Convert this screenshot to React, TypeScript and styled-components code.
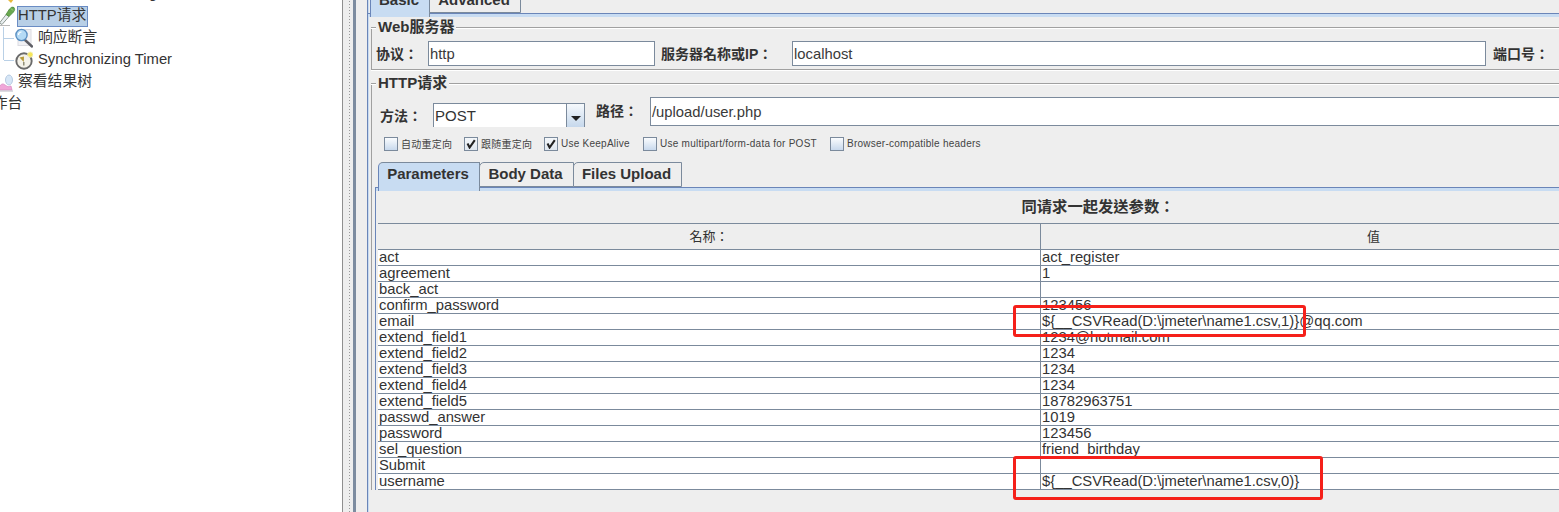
import React from "react";
import styled, { createGlobalStyle } from "styled-components";

const Global = createGlobalStyle`
  html, body { margin: 0; padding: 0; background: #eeeeee; overflow: hidden; }
  #root { width: 1559px; height: 512px; }
`;

const SANS = `"Liberation Sans", "Noto Sans CJK SC", sans-serif`;
const LABEL = `"Liberation Sans", "Noto Sans CJK TC", sans-serif`;
const BLUE = "#6a85b8";
const BAND = "#c8dcf2";
const EDGE = "#7b8a9c";
const RULE = "#a0a0a0";
const INK = "#333333";

const Page = styled.div`
  position: relative;
  display: flex;
  width: 1559px;
  height: 512px;
  overflow: hidden;
  background: #eeeeee;
  color: ${INK};
  font-family: ${SANS};
`;

/* ---------- tree ---------- */
const Tree = styled.div`
  flex: 0 0 342px;
  background: #ffffff;
  margin-top: -17px;
  height: 529px;
  overflow: hidden;
`;
const TreeRow = styled.div<{ $indent: number }>`
  position: relative;
  display: flex;
  align-items: center;
  gap: ${(p) => (p.$indent > 0 ? 5 : 2)}px;
  height: 22px;
  padding-left: ${(p) => p.$indent}px;
  font-size: 14.8px;
  white-space: nowrap;
`;
const Guide = styled.span<{ $long?: boolean }>`
  position: absolute;
  left: 3px;
  top: 0;
  width: 10px;
  height: ${(p) => (p.$long ? 22 : 11)}px;
  border-left: 1px solid #b9d0e6;
  &::after {
    content: "";
    position: absolute;
    left: 0;
    top: 11px;
    width: 10px;
    border-top: 1px solid #b9d0e6;
  }
`;
const TreeIcon = styled.svg<{ $shift?: number }>`
  flex: 0 0 18px;
  width: 18px;
  height: 20px;
  margin-left: ${(p) => p.$shift ?? 0}px;
`;
const TreeText = styled.span<{ $selected?: boolean; $shift?: number }>`
  display: inline-flex;
  align-items: center;
  height: 21px;
  padding: 0 2px 2px 1px;
  margin-left: ${(p) => p.$shift ?? -1}px;
  box-sizing: border-box;
  line-height: 16px;
  background: ${(p) => (p.$selected ? "#b8cfe6" : "transparent")};
  outline: ${(p) => (p.$selected ? "1px solid #6a8cc4" : "none")};
  outline-offset: -1px;
`;

/* ---------- splitter ---------- */
const Splitter = styled.div`
  flex: 0 0 25px;
  display: flex;
  border-left: 1px solid #8f8f8f;
  box-sizing: border-box;
`;
const Dots = styled.div`
  flex: 0 0 10px;
  background-image: radial-gradient(circle, #9a9a9a 0.7px, transparent 0.8px);
  background-size: 3px 3px;
  background-position: 5px 0;
  background-repeat: repeat-y;
`;
const SplitBar = styled.div`
  flex: 0 0 3px;
  background: #7d8ca0;
`;

/* ---------- main ---------- */
const Main = styled.div`
  flex: 1;
  min-width: 0;
  border-left: 1px solid ${BLUE};
  box-shadow: inset 1px 0 0 ${BAND};
  overflow: hidden;
`;
const TabStrip = styled.div<{ $left: number; $top?: number }>`
  display: flex;
  height: 25px;
  margin-top: ${(p) => p.$top ?? 0}px;
  margin-left: ${(p) => p.$left}px;
  position: relative;
  z-index: 1;
`;
const Tab = styled.div<{ $active?: boolean; $w: number }>`
  width: ${(p) => p.$w}px;
  box-sizing: border-box;
  display: flex;
  align-items: center;
  justify-content: center;
  padding: 0 2px ${(p) => (p.$active ? 7 : 3)}px 0;
  font-size: 15px;
  font-weight: 700;
  color: ${INK};
  background: ${(p) => (p.$active ? BAND : "#eeeeee")};
  border: 1px solid ${EDGE};
  border-left-color: ${(p) => (p.$active ? BLUE : EDGE)};
  border-bottom: ${(p) => (p.$active ? "none" : `1px solid ${EDGE}`)};
  border-top-left-radius: 5px;
  margin-right: -1px;
  margin-bottom: ${(p) => (p.$active ? -4 : 0)}px;
`;
const TabPane = styled.div`
  border-top: 1px solid ${BLUE};
`;
const Band = styled.div`
  height: 3px;
  background: ${BAND};
`;
const Content = styled.div`
  padding: 2px 0 0 3px;
  width: 1700px;
`;

/* ---------- titled borders ---------- */
const Section = styled.section<{ $gap?: number }>`
  margin-top: ${(p) => p.$gap ?? 0}px;
`;
const SectionHead = styled.div`
  display: flex;
  height: 16px;
  position: relative;
  z-index: 1;
`;
const HeadRule = styled.div<{ $w?: number }>`
  ${(p) => (p.$w ? `flex: 0 0 ${p.$w}px;` : "flex: 1;")}
  height: 0;
  margin-top: 8px;
  border-top: 1px solid ${RULE};
  border-bottom: 1px solid #ffffff;
`;
const SectionTitle = styled.div`
  padding: 0 2px;
  font-family: ${LABEL};
  font-size: 15px;
  font-weight: 700;
  line-height: 16px;
  white-space: nowrap;
`;
const SectionBody = styled.div<{ $closed?: boolean }>`
  margin-top: -8px;
  padding-top: 14px;
  border-left: 1px solid ${RULE};
  ${(p) => p.$closed && `border-bottom: 1px solid ${RULE}; box-shadow: 0 1px 0 #fff; padding-bottom: 3px;`}
`;

/* ---------- forms ---------- */
const ServerRow = styled.div`
  display: flex;
  align-items: center;
  height: 25px;
  padding-left: 4px;
`;
const PathRow = styled.div`
  display: flex;
  height: 30px;
  padding-left: 8px;
`;
const Label = styled.label<{ $w: number; $after: number; $self?: string; $pad?: number; $top?: number }>`
  flex: 0 0 ${(p) => p.$w}px;
  margin-right: ${(p) => p.$after}px;
  margin-top: ${(p) => p.$top ?? 0}px;
  align-self: ${(p) => p.$self ?? "center"};
  padding-bottom: ${(p) => p.$pad ?? 0}px;
  font-family: ${LABEL};
  font-size: 14px;
  font-weight: 700;
  line-height: 16px;
  white-space: nowrap;
`;
const Field = styled.div<{ $w: number; $h: number; $after?: number }>`
  flex: 0 0 ${(p) => p.$w}px;
  height: ${(p) => p.$h}px;
  margin-right: ${(p) => p.$after ?? 0}px;
  box-sizing: border-box;
  display: flex;
  align-items: center;
  padding-left: 1px;
  background: #ffffff;
  border: 1px solid ${EDGE};
  font-size: 14.8px;
  color: #3a3a3a;
`;
const Combo = styled.div`
  flex: 0 0 152px;
  height: 24px;
  margin: 6px 11px 0 0;
  box-sizing: border-box;
  display: flex;
  border: 1px solid ${EDGE};
  border-bottom: none;
  background: #ffffff;
`;
const ComboValue = styled.div`
  flex: 1;
  display: flex;
  align-items: center;
  padding-left: 1px;
  font-size: 15px;
`;
const ComboButton = styled.div`
  flex: 0 0 18px;
  display: flex;
  align-items: center;
  justify-content: center;
  padding-top: 5px;
  box-sizing: border-box;
  border-left: 1px solid ${EDGE};
  background: linear-gradient(#f6f9fc, #c6d8ec);
  &::after {
    content: "";
    border-left: 5px solid transparent;
    border-right: 5px solid transparent;
    border-top: 5px solid #222;
  }
`;
const OptionRow = styled.div`
  display: grid;
  grid-template-columns: 80px 80px 99px 187px auto;
  justify-content: start;
  align-items: center;
  height: 14px;
  margin-top: 9px;
  padding-left: 12px;
`;
const Option = styled.div`
  display: flex;
  align-items: center;
  gap: 3px;
  font-size: 10px;
  letter-spacing: 0.25px;
  color: #444444;
  white-space: nowrap;
`;
const Box = styled.span<{ $on?: boolean }>`
  flex: 0 0 14px;
  width: 14px;
  height: 14px;
  box-sizing: border-box;
  display: flex;
  align-items: center;
  justify-content: center;
  border: 1px solid ${EDGE};
  background: ${(p) => (p.$on ? "linear-gradient(#f4f7fa, #dfe7f0)" : "linear-gradient(#fafcfe, #c8d9ed)")};
`;

/* ---------- inner tabs + table ---------- */
const InnerTabs = styled.div`
  margin: 12px 0 0 3px;
`;
const InnerPane = styled.div`
  border-top: 1px solid ${BLUE};
  border-left: 1px solid ${BLUE};
`;
const TableTitle = styled.div`
  width: 1444px;
  height: 32px;
  line-height: 32px;
  text-align: center;
  font-family: ${LABEL};
  font-size: 15.3px;
  font-weight: 700;
`;
const Table = styled.div`
  margin-left: 2px;
  width: 1328px;
  border-top: 1px solid ${EDGE};
`;
const Row = styled.div<{ $head?: boolean }>`
  display: grid;
  grid-template-columns: 662px 666px;
  height: ${(p) => (p.$head ? 25 : 15)}px;
  border-bottom: 1px solid ${EDGE};
  background: ${(p) => (p.$head ? "#eeeeee" : "#ffffff")};
`;
const Cell = styled.div`
  padding-left: 1px;
  font-size: 14.8px;
  line-height: 15px;
  color: ${INK};
  white-space: nowrap;
  & + & {
    border-left: 1px solid ${EDGE};
  }
`;
const HeadCell = styled.div`
  display: flex;
  align-items: center;
  justify-content: center;
  padding-bottom: 2px;
  font-family: ${LABEL};
  font-size: 13px;
  & + & {
    border-left: 1px solid ${EDGE};
  }
`;
const Callout = styled.div<{ $x: number; $y: number; $w: number; $h: number }>`
  position: absolute;
  left: ${(p) => p.$x}px;
  top: ${(p) => p.$y}px;
  width: ${(p) => p.$w}px;
  height: ${(p) => p.$h}px;
  box-sizing: border-box;
  border: 3px solid #f5201a;
  border-radius: 3px;
  pointer-events: none;
`;

const rows: [string, string][] = [
  ["act", "act_register"],
  ["agreement", "1"],
  ["back_act", ""],
  ["confirm_password", "123456"],
  ["email", "${__CSVRead(D:\\jmeter\\name1.csv,1)}@qq.com"],
  ["extend_field1", "1234@hotmail.com"],
  ["extend_field2", "1234"],
  ["extend_field3", "1234"],
  ["extend_field4", "1234"],
  ["extend_field5", "18782963751"],
  ["passwd_answer", "1019"],
  ["password", "123456"],
  ["sel_question", "friend_birthday"],
  ["Submit", ""],
  ["username", "${__CSVRead(D:\\jmeter\\name1.csv,0)}"],
];

const options: [string, boolean][] = [
  ["自动重定向", false],
  ["跟随重定向", true],
  ["Use KeepAlive", true],
  ["Use multipart/form-data for POST", false],
  ["Browser-compatible headers", false],
];

const Dropper = () => (
  <TreeIcon $shift={-2} viewBox="0 0 18 20">
    <path d="M1.5 17 L8.5 8 L11 10.5 L4 18.5 Z" fill="#e8eef0" stroke="#8f9a94" strokeWidth="1" />
    <path d="M8 8.5 L11.5 3 Q14 0 16 1.5 Q17.5 3.5 15.5 6 L11 10.5 Z" fill="#6aa84f" stroke="#4a8a3a" strokeWidth="0.8" />
    <path d="M13 2.5 L15 4.5" stroke="#a7d690" strokeWidth="1" />
    <path d="M1 19.5 L12 19.5" stroke="#b8b8b8" strokeWidth="1" />
  </TreeIcon>
);
const Magnifier = () => (
  <TreeIcon viewBox="0 0 18 20">
    <rect x="3" y="1.5" width="13" height="16" fill="#f1f1f4" stroke="#dcdce2" />
    <path d="M10 12 L17 18.5" stroke="#5f5f66" strokeWidth="2.4" strokeLinecap="round" />
    <circle cx="6.5" cy="7" r="5.6" fill="#b4daf5" stroke="#5a8fc2" strokeWidth="1.4" />
    <path d="M3.5 7 A3 3 0 0 1 6.5 4" fill="none" stroke="#ffffff" strokeWidth="1.2" />
  </TreeIcon>
);
const Clock = () => (
  <TreeIcon viewBox="0 0 18 20">
    <circle cx="9" cy="11" r="7.7" fill="#f4f2ea" stroke="#6a6a6a" strokeWidth="1.9" />
    <path d="M8.8 12 L4.5 7.5 L9 6.5 Z" fill="#b69a3a" />
    <path d="M8.8 12 L8.8 15.5" stroke="#7e7e66" strokeWidth="1.3" />
    <circle cx="15.3" cy="4.6" r="2.7" fill="#f7e65a" stroke="#f4f1c4" strokeWidth="0.9" />
  </TreeIcon>
);
const ResultTree = () => (
  <TreeIcon $shift={-2} viewBox="0 0 18 20">
    <path d="M1 18 L1 15 Q4 10 7 13 Q10 16 13 14 L14 18 Z" fill="#f0a6d8" stroke="#d886c0" strokeWidth="0.7" />
    <ellipse cx="11" cy="8" rx="3.5" ry="5" fill="#d6e6f6" stroke="#a9c0da" strokeWidth="0.8" />
    <path d="M0 19 L15 19" stroke="#b9b9c4" strokeWidth="1" />
  </TreeIcon>
);
const TopIcon = () => (
  <TreeIcon $shift={-2} viewBox="0 0 18 20">
    <path d="M9 15 L13 19 L16 15 L12 12 Z" fill="#e7b93c" />
  </TreeIcon>
);
const Check = () => (
  <svg width="10" height="10" viewBox="0 0 10 10">
    <path d="M1.5 4.5 L3.6 8.5 L8.8 1.2" fill="none" stroke="#222" strokeWidth="2.1" />
  </svg>
);

export default function App() {
  return (
    <Page>
      <Global />
      <Tree>
        <TreeRow $indent={0}>
          <TopIcon />
          <TreeText>CSV Data Set Config</TreeText>
        </TreeRow>
        <TreeRow $indent={0}>
          <Dropper />
          <TreeText $selected>HTTP请求</TreeText>
        </TreeRow>
        <TreeRow $indent={15}>
          <Guide $long />
          <Magnifier />
          <TreeText>响应断言</TreeText>
        </TreeRow>
        <TreeRow $indent={15}>
          <Guide />
          <Clock />
          <TreeText>Synchronizing Timer</TreeText>
        </TreeRow>
        <TreeRow $indent={0}>
          <ResultTree />
          <TreeText>察看结果树</TreeText>
        </TreeRow>
        <TreeRow $indent={0}>
          <TreeText $shift={-23}>工作台</TreeText>
        </TreeRow>
      </Tree>

      <Splitter>
        <Dots />
        <SplitBar />
      </Splitter>

      <Main>
        <TabStrip $left={2} $top={-12}>
          <Tab $active $w={60}>Basic</Tab>
          <Tab $w={92}>Advanced</Tab>
        </TabStrip>
        <TabPane>
          <Band />
          <Content>
            <Section>
              <SectionHead>
                <HeadRule $w={5} />
                <SectionTitle>Web服务器</SectionTitle>
                <HeadRule />
              </SectionHead>
              <SectionBody $closed>
                <ServerRow>
                  <Label $w={42} $after={10}>协议：</Label>
                  <Field $w={227} $h={25} $after={6}>http</Field>
                  <Label $w={121} $after={10}>服务器名称或IP：</Label>
                  <Field $w={694} $h={25} $after={7}>localhost</Field>
                  <Label $w={60} $after={0}>端口号：</Label>
                </ServerRow>
              </SectionBody>
            </Section>

            <Section $gap={5}>
              <SectionHead>
                <HeadRule $w={5} />
                <SectionTitle>HTTP请求</SectionTitle>
                <HeadRule />
              </SectionHead>
              <SectionBody>
                <PathRow>
                  <Label $w={41} $after={11} $self="flex-end" $pad={3}>方法：</Label>
                  <Combo>
                    <ComboValue>POST</ComboValue>
                    <ComboButton />
                  </Combo>
                  <Label $w={41} $after={12} $self="flex-start" $top={6}>路径：</Label>
                  <Field $w={1000} $h={29}>/upload/user.php</Field>
                </PathRow>
                <OptionRow>
                  {options.map(([text, on]) => (
                    <Option key={text}>
                      <Box $on={on}>{on && <Check />}</Box>
                      {text}
                    </Option>
                  ))}
                </OptionRow>
                <InnerTabs>
                  <TabStrip $left={3}>
                    <Tab $active $w={102}>Parameters</Tab>
                    <Tab $w={95}>Body Data</Tab>
                    <Tab $w={109}>Files Upload</Tab>
                  </TabStrip>
                  <InnerPane>
                    <Band />
                    <TableTitle>同请求一起发送参数：</TableTitle>
                    <Table>
                      <Row $head>
                        <HeadCell>名称：</HeadCell>
                        <HeadCell>值</HeadCell>
                      </Row>
                      {rows.map(([name, value]) => (
                        <Row key={name}>
                          <Cell>{name}</Cell>
                          <Cell>{value}</Cell>
                        </Row>
                      ))}
                    </Table>
                  </InnerPane>
                </InnerTabs>
              </SectionBody>
            </Section>
          </Content>
        </TabPane>
      </Main>

      <Callout $x={1013} $y={305} $w={293} $h={32} />
      <Callout $x={1013} $y={456} $w={310} $h={44} />
    </Page>
  );
}
